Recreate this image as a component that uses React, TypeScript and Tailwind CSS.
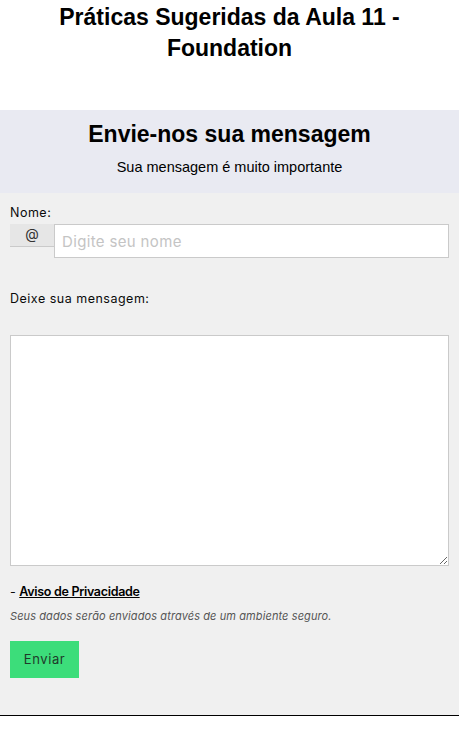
import React from "react";

export default function App() {
	return (
		<div className="w-[459px] bg-white">
			<h1 className="pt-[2px] h-[110px] text-center text-[23px] leading-[31px] font-bold text-black font-['Liberation_Sans',Arial,sans-serif]">
				Práticas Sugeridas da Aula 11 -
				<br />
				Foundation
			</h1>
			<div className="h-[83px] bg-[#e9eaf2] text-center text-black font-['Liberation_Sans',Arial,sans-serif]">
				<h2 className="pt-[10px] text-[23px] leading-[29px] font-bold">
					Envie-nos sua mensagem
				</h2>
				<p className="mt-[9px] text-[14.5px] leading-[18px]">
					Sua mensagem é muito importante
				</p>
			</div>
			<form className="h-[523px] bg-[#f0f0f0] px-[10px] pt-[12px] text-[#0a0a0a] font-['Inter',sans-serif] border-b border-black">
				<label className="block text-[12.5px] leading-[15px] tracking-[0.5px]">Nome:</label>
				<div className="mt-[4px] flex items-start">
					<span className="w-[44px] h-[23px] flex justify-center items-start bg-[#e6e6e6] border-b border-[#cacaca] text-[14px] leading-[20px] text-[#333]">
						@
					</span>
					<input
						className="flex-1 h-[34px] bg-white border border-[#cacaca] px-[7px] text-[15px] tracking-[0.35px] placeholder:text-[#c4c4c4] outline-none"
						placeholder="Digite seu nome"
					/>
				</div>
				<label className="block mt-[33px] text-[12.5px] leading-[15px] tracking-[0.5px]">
					Deixe sua mensagem:
				</label>
				<textarea className="mt-[29px] block w-full h-[231px] bg-white border border-[#cacaca] outline-none" />
				<p className="mt-[18px] text-[12.5px] leading-[15px]">
					-{" "}
					<a href="#" className="font-semibold underline text-black tracking-[-0.3px]">
						Aviso de Privacidade
					</a>
				</p>
				<p className="mt-[10px] text-[11px] leading-[14px] italic text-[#555] tracking-[0.1px]">
					Seus dados serão enviados através de um ambiente seguro.
				</p>
				<button
					type="button"
					className="mt-[18px] w-[69px] h-[37px] bg-[#3cdd7a] text-[13px] tracking-[0.6px] text-[#1f3a2a]"
				>
					Enviar
				</button>
			</form>
		</div>
	);
}
